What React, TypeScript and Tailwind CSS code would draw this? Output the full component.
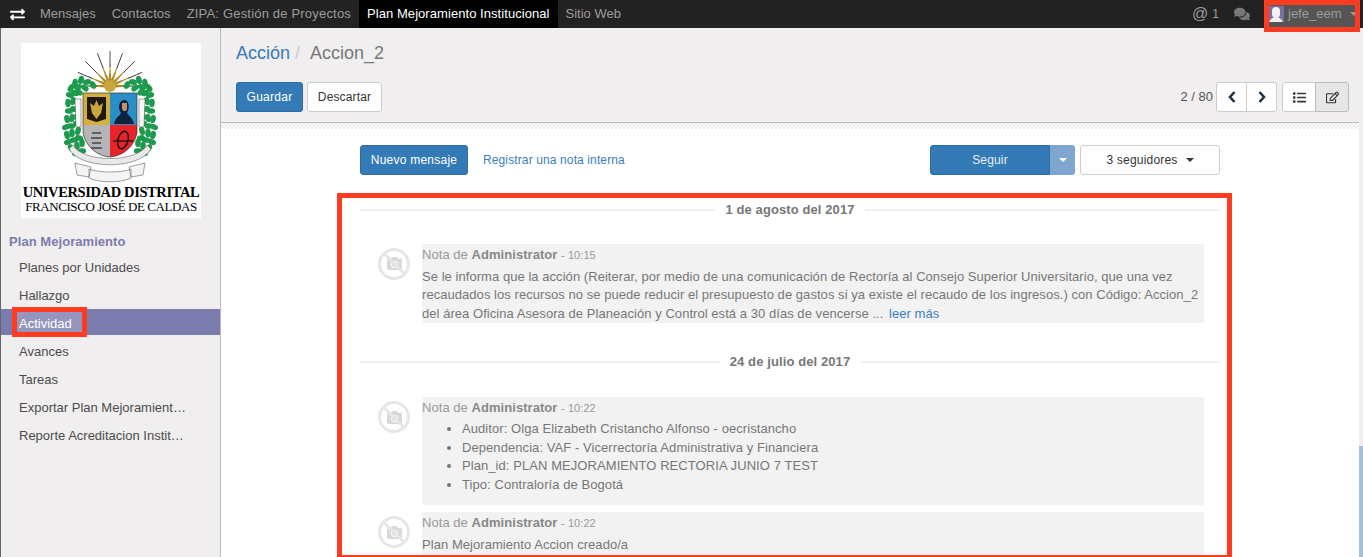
import { FaExchangeAlt, FaComments, FaList, FaRegEdit, FaCamera } from "react-icons/fa";

const navItems = [
  { label: "Mensajes", className: "" },
  { label: "Contactos", className: "tracking-[0.05px]" },
  { label: "ZIPA: Gestión de Proyectos", className: "tracking-[0.19px]" },
  { label: "Plan Mejoramiento Institucional", className: "tracking-[0.06px] bg-black text-white" },
  { label: "Sitio Web", className: "" },
];
const menuItems = ["Planes por Unidades", "Hallazgo", "Actividad", "Avances", "Tareas", "Exportar Plan Mejoramient…", "Reporte Acreditacion Instit…"];

// leaves of the laurel, as x,y on the left side of the crest (mirrored for the right)
const leaves = [
  [72, 42], [66, 39], [60, 37], [54, 40], [50, 45], [57, 44], [64, 45], [49, 52], [54, 50], [58, 49], [47, 60],
  [52, 58], [48, 68], [53, 66], [46, 76], [51, 75], [56, 73], [45, 84], [50, 83], [56, 81], [46, 92], [51, 90],
  [57, 88], [47, 99], [53, 97], [58, 95], [50, 105], [56, 103], [61, 100], [55, 110], [61, 108],
];

function Crest() {
  const rays = [-90, -67, -45, -21, 0, 21, 45, 67, 90];
  return (
    <svg viewBox="0 0 180 142" className="w-[180px] h-[142px] shrink-0">
      {rays.map((a) => (
        <g key={a} transform={`rotate(${a} 89 43)`}>
          <path d="M87.6 38 L89 18 L90.4 38 Z" fill="#b08d2c" />
          <path d={Math.abs(a) === 90 ? "M89 30 V18" : "M89 24 V8"} stroke="#2a2a2a" strokeWidth="0.8" />
        </g>
      ))}
      {leaves.map(([x, y]) => (
        <g key={`${x}-${y}`}>
          <ellipse cx={x} cy={y} rx="4.2" ry="2.8" fill="#1e9a4e" transform={`rotate(${(x * 7 + y * 11) % 180} ${x} ${y})`} />
          <ellipse cx={178 - x} cy={y} rx="4.2" ry="2.8" fill="#1e9a4e" transform={`rotate(${-((x * 7 + y * 11) % 180)} ${178 - x} ${y})`} />
        </g>
      ))}
      <circle cx="89" cy="43" r="6" fill="#c9a63a" />
      <path d="M54 56 H60 L60 84 H55 Z M124 56 H118 L118 84 H123 Z" fill="#f7f7f7" stroke="#444" strokeWidth="0.5" />
      <path d="M62 50 H89 V82 H62 Z" fill="#d6ae3d" />
      <path d="M89 50 H116 V82 H89 Z" fill="#2a8fc8" />
      <path d="M62 82 H89 V114 C76 113 65 104 62 90 Z" fill="#b5b5b8" />
      <path d="M89 82 H116 V90 C113 104 102 113 89 114 Z" fill="#e8242a" />
      <path d="M62 50 H116 V90 C113 104 102 113 89 114 C76 113 65 104 62 90 Z" fill="none" stroke="#333" strokeWidth="0.7" />
      <path d="M66 54 H85 V76 L75.5 79 L66 76 Z" fill="#1e1a12" />
      <path d="M75.5 57 L78 63 L82 60 L80 70 L75.5 76 L71 70 L69 60 L73 63 Z" fill="#c9a73a" />
      <path d="M93 81 C94 74 99 73 100 70 C97 66 97 58 103 57 C108 57 109 64 106 70 C108 73 112 75 113 81 Z" fill="#10233d" />
      <path d="M101 60 H106 V67 C104 69 102 68 101 66 Z" fill="#c98f6b" />
      <ellipse cx="102" cy="97" rx="5" ry="9" fill="none" stroke="#111" strokeWidth="1.4" transform="rotate(15 102 97)" />
      <path d="M92 98 H112" stroke="#111" strokeWidth="1.2" />
      <path d="M71 90 H80 M70 95 H81 M71 100 H80 M70 105 H81" stroke="#444" strokeWidth="1.3" />
      <path d="M52 102 C62 120 116 120 126 102 L130 106 C118 127 60 127 48 106 Z" fill="#e9e9e9" stroke="#666" strokeWidth="0.6" />
      <path d="M54 120 L70 124 L68 134 L56 132 Z M124 120 L108 124 L110 134 L122 132 Z M68 126 C78 130 100 130 110 126 L110 135 C100 140 78 140 68 135 Z" fill="#f4f4f4" stroke="#777" strokeWidth="0.7" />
    </svg>
  );
}

function Logo() {
  return (
    <div className="w-[180px] h-[175px] bg-white flex flex-col items-center overflow-hidden text-black font-['Liberation_Serif',serif]">
      <Crest />
      <div className="text-[14.5px] leading-[14px] font-bold tracking-[-0.38px] whitespace-nowrap">UNIVERSIDAD DISTRITAL</div>
      <div className="text-[13px] leading-[15px] tracking-[-0.42px] whitespace-nowrap">FRANCISCO JOSÉ DE CALDAS</div>
    </div>
  );
}

function Avatar() {
  return (
    <div className="w-[32px] h-[32px] shrink-0 rounded-full border-[3px] border-[#e6e6e6] relative flex items-center justify-center mt-[4px] ml-[-44px] mr-[12px] overflow-hidden">
      <FaCamera className="text-[#d9d9d9] text-[15px]" />
      <div className="absolute w-[32px] h-[3px] bg-[#e6e6e6] rotate-45" />
    </div>
  );
}

function DateLine({ label }: { label: string }) {
  return (
    <div className="flex items-center">
      <div className="flex-1 h-[2px] bg-[#f0f0f0]" />
      <span className="px-[10px] font-bold text-[#777777] tracking-[0.1px]">{label}</span>
      <div className="flex-1 h-[2px] bg-[#f0f0f0]" />
    </div>
  );
}

function Message({ time, className, children }: { time: string; className: string; children: React.ReactNode }) {
  return (
    <div className="flex pl-[62px] pr-[16px]">
      <div className={`flex flex-1 ${className}`}>
        <Avatar />
        <div className="flex-1 bg-[#f2f2f2] text-[#777777] min-w-0 tracking-[0.05px]">
          <div className="text-[#999999] mb-[3px] h-[21px] leading-[21px]">
            Nota de <b className="text-[#888888]">Administrator</b> <span className="text-[11px]">- {time}</span>
          </div>
          {children}
        </div>
      </div>
    </div>
  );
}

function Chevron({ d }: { d: string }) {
  return (
    <svg viewBox="0 0 8 12" className="w-[8px] h-[12px]">
      <path d={d} fill="none" stroke="#1f3346" strokeWidth="2.6" />
    </svg>
  );
}

export default function App() {
  return (
    <div className="w-[1363px] h-[557px] overflow-hidden flex flex-col bg-white text-[13px] leading-[18.57px] font-['Liberation_Sans',Arial,sans-serif] relative">
      {/* top bar */}
      <nav className="h-[28px] shrink-0 bg-[#222222] flex items-stretch text-[#9d9d9d]">
        <div className="w-[32px] flex items-center justify-center pl-[2px]">
          <FaExchangeAlt className="text-white text-[15px]" />
        </div>
        {navItems.map((item) => (
          <div key={item.label} className={`px-[8px] flex items-center whitespace-nowrap ${item.className}`}>
            {item.label}
          </div>
        ))}
        <div className="flex-1" />
        <div className="flex items-center gap-[4px] mr-[15px]">
          <span className="text-[16px]">@</span>
          <span className="text-[12px]">1</span>
        </div>
        <div className="flex items-center mr-[19px]">
          <FaComments className="text-[16px] text-[#777777]" />
        </div>
        <div className="w-[86px] mr-[8px] bg-[#555555] flex items-center gap-[4px]">
          <div className="w-[16px] h-[16px] bg-[#7c6f9c] overflow-hidden ml-[-1px] relative shrink-0">
            <div className="absolute left-[4px] top-[1px] w-[8px] h-[11px] rounded-full bg-[#f2f2f2]" />
            <div className="absolute left-[1px] top-[11px] w-[14px] h-[8px] rounded-t-full bg-[#f2f2f2]" />
          </div>
          <span>jefe_eem</span>
          <span className="ml-[5px] border-x-[4px] border-x-transparent border-t-[4px] border-t-[#999999]" />
        </div>
      </nav>

      <div className="flex-1 min-h-0 flex">
        {/* sidebar */}
        <aside className="w-[221px] shrink-0 bg-[#f0eeee] border-l border-l-[#666666] border-r border-r-[#bbbbbb] overflow-hidden">
          <div className="pt-[15px] pl-[20px]">
            <Logo />
          </div>
          <div className="mt-[15px] pl-[8px] font-bold text-[#7c7bad] h-[19px] tracking-[0.05px]">Plan Mejoramiento</div>
          <ul className="mt-[1px] text-[#4c4c4c]">
            {menuItems.map((item) => (
              <li
                key={item}
                className={`h-[26px] mb-[2px] pt-[4px] pl-[18px] flex items-center whitespace-nowrap ${item === "Actividad" ? "bg-[#7c7bad] text-white" : ""}`}
              >
                {item}
              </li>
            ))}
          </ul>
        </aside>

        {/* main */}
        <main className="flex-1 min-w-0 flex flex-col relative">
          <header className="h-[95px] shrink-0 bg-[#f0eeee] border-b border-b-[#bbbbbb] pl-[15px] pr-[10px]">
            <div className="h-[54px] flex items-center pb-[4px] text-[18px] leading-[24px]">
              <span className="text-[#337ab7]">Acción</span>
              <span className="text-[#cccccc] ml-[5px] mr-[10px]">/</span>
              <span className="text-[#777777]">Accion_2</span>
            </div>
            <div className="flex items-center">
              <button className="h-[30px] w-[67px] rounded-[3px] bg-[#337ab7] border border-[#2e6da4] text-white text-[12px] tracking-[0.25px]">Guardar</button>
              <button className="h-[30px] w-[75px] ml-[4px] rounded-[3px] bg-white border border-[#cccccc] text-[#333333] text-[12px] tracking-[0.15px]">Descartar</button>
              <div className="flex-1" />
              <span className="text-[#555555] mr-[3px]">2 / 80</span>
              <div className="flex h-[30px] text-[#333333]">
                <button className="w-[31px] bg-white border border-[#cccccc] rounded-l-[3px] flex items-center justify-center"><Chevron d="M6.5 1 L2 6 L6.5 11" /></button>
                <button className="w-[31px] ml-[-1px] bg-white border border-[#cccccc] rounded-r-[3px] flex items-center justify-center"><Chevron d="M1.5 1 L6 6 L1.5 11" /></button>
              </div>
              <div className="flex h-[30px] ml-[5px]">
                <button className="w-[34px] bg-white border border-[#cccccc] rounded-l-[3px] flex items-center justify-center"><FaList className="text-[13px] text-[#333333]" /></button>
                <button className="w-[34px] ml-[-1px] bg-[#e6e6e6] border border-[#bbbbbb] rounded-r-[3px] flex items-center justify-center"><FaRegEdit className="text-[13px] text-[#333333]" /></button>
              </div>
            </div>
          </header>
          <div className="h-[6px] shrink-0 bg-[repeating-conic-gradient(#ebebeb_0_25%,#ffffff_0_50%)] bg-[length:4px_4px]" />

          {/* chatter */}
          <div className="flex-1 min-h-0 overflow-hidden pl-[139px] pr-[139px] pt-[16px]">
            <div className="flex items-center h-[30px] text-[12px]">
              <button className="h-[30px] w-[108px] rounded-[3px] bg-[#337ab7] border border-[#2e6da4] text-white tracking-[0.23px]">Nuevo mensaje</button>
              <span className="ml-[15px] text-[#3a7fbc] tracking-[0.12px]">Registrar una nota interna</span>
              <div className="flex-1" />
              <button className="h-[30px] w-[120px] rounded-l-[3px] bg-[#337ab7] border border-[#2e6da4] text-[#e8eef5] tracking-[0.15px]">Seguir</button>
              <button className="h-[30px] w-[25px] rounded-r-[3px] bg-[#7ea6cf] flex items-center justify-center">
                <span className="border-x-[4px] border-x-transparent border-t-[4px] border-t-white" />
              </button>
              <button className="h-[30px] w-[140px] ml-[5px] rounded-[3px] bg-white border border-[#cccccc] text-[#333333] tracking-[0.2px] flex items-center justify-center gap-[8px]">
                3 seguidores
                <span className="border-x-[4px] border-x-transparent border-t-[4px] border-t-[#333333]" />
              </button>
            </div>

            <div className="mt-[26px]"><DateLine label="1 de agosto del 2017" /></div>
            <div className="mt-[24px]">
              <Message time="10:15" className="h-[79px]">
                <p>
                  Se le informa que la acción (Reiterar, por medio de una comunicación de Rectoría al Consejo Superior Universitario, que una vez recaudados los recursos no se puede reducir el presupuesto de gastos si ya existe el recaudo de los ingresos.) con Código: Accion_2 del área Oficina Asesora de Planeación y Control está a 30 días de vencerse ... <span className="text-[#3a7fbc] ml-[2px]">leer más</span>
                </p>
              </Message>
            </div>
            <div className="mt-[30px]"><DateLine label="24 de julio del 2017" /></div>
            <div className="mt-[26px]">
              <Message time="10:22" className="h-[108px]">
                <ul className="list-disc pl-[40px] -mt-[1px] tracking-[0.07px]">
                  <li>Auditor: Olga Elizabeth Cristancho Alfonso - oecristancho</li>
                  <li>Dependencia: VAF - Vicerrectoría Administrativa y Financiera</li>
                  <li>Plan_id: PLAN MEJORAMIENTO RECTORIA JUNIO 7 TEST</li>
                  <li>Tipo: Contraloría de Bogotá</li>
                </ul>
              </Message>
            </div>
            <div className="mt-[7px]">
              <Message time="10:22" className="h-[60px]">
                <p>Plan Mejoramiento Accion creado/a</p>
              </Message>
            </div>
          </div>
        </main>

        {/* scrollbar */}
        <div className="w-[4px] shrink-0 bg-[#f0eeee] flex flex-col justify-end">
          <div className="h-[111px] bg-[#a8c0d6]" />
        </div>
      </div>

      {/* red annotation boxes */}
      <div className="absolute left-[1264px] top-0 w-[96px] h-[32px] border-[5px] border-[#ff3b21]" />
      <div className="absolute left-[12px] top-[307px] w-[75px] h-[30px] border-[5px] border-[#ff3b21] bg-white/20" />
      <div className="absolute left-[337px] top-[193px] w-[895px] h-[364px] border-[5px] border-b-[2px] border-[#ff3b21]" />
    </div>
  );
}
